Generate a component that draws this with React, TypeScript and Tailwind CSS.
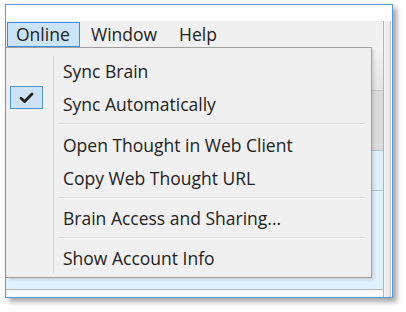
type Item = { label: string; checked?: boolean } | { sep: true };

const items: Item[] = [
  { label: "Sync Brain" },
  { label: "Sync Automatically", checked: true },
  { sep: true },
  { label: "Open Thought in Web Client" },
  { label: "Copy Web Thought URL" },
  { sep: true },
  { label: "Brain Access and Sharing..." },
  { sep: true },
  { label: "Show Account Info" },
];

function OnlineMenu() {
  return (
    <div className="absolute left-0 top-0 w-[366px] h-[231px] bg-[#f0f0f0] border-t border-r border-b border-[#a0a0a0] pt-[6px] shadow-[2px_2px_3px_rgba(0,0,0,0.12)]">
      {/* icon gutter line */}
      <div className="absolute left-[47px] top-[8px] h-[217px] w-[2px] border-l border-[#dadada] border-r-white" />
      {items.map((it, i) =>
        "sep" in it ? (
          <div key={i} className={`${i === 2 ? "h-[8px]" : "h-[7px]"} flex items-center pl-[52px] pr-[6px]`}>
            <div className="h-[2px] w-full border-t border-[#d7d7d7] border-b border-b-white" />
          </div>
        ) : (
          <div key={i} className="relative h-[33px] flex items-center pl-[57px] text-[17.5px] text-[#222] pt-[2px]">
            {it.checked && (
              <div className="absolute left-[4px] top-[-1px] w-[33px] h-[23px] bg-[#cde2f4] border border-[#4f95d6] flex items-center justify-center">
                <svg width="15" height="12" viewBox="0 0 15 12" fill="none">
                  <path d="M2 6.2 L5.6 9.6 L13 2" stroke="#1f1f1f" strokeWidth="2.8" strokeLinecap="round" strokeLinejoin="round" />
                </svg>
              </div>
            )}
            {it.label}
          </div>
        )
      )}
    </div>
  );
}

export default function App() {
  return (
    <div className="w-[406px] h-[312px] bg-white pl-[5px] pt-[4px]" style={{ fontFamily: '"Open Sans", "Noto Sans", sans-serif' }}>
      <div className="w-[388px] h-[294px] border border-[#5b9bd5] bg-white flex flex-col shadow-[4px_4px_5px_rgba(0,0,0,0.35)]">
        {/* title strip */}
        <div className="h-[16px] bg-white" />
        <div className="flex-1 flex">
          <div className="w-[377px] flex flex-col">
            {/* menu bar */}
            <div className="h-[26px] bg-[#f0f0f0] flex text-[17.5px] text-[#222]">
              <div className="ml-[1px] mt-[1px] w-[73px] h-[25px] bg-[#cce4f7] border border-[#3d8ee0] pl-[8px] flex items-center">
                Online
              </div>
              <div className="w-[87px] pl-[11px] flex items-center">Window</div>
              <div className="pl-[12px] flex items-center">Help</div>
            </div>
            {/* content behind the menu */}
            <div className="relative flex-1 flex flex-col border-b border-[#b5b5b5]">
              <div className="h-[44px] bg-gradient-to-b from-[#f2f2f2] to-[#e4e4e4] border-b border-[#c6c6c6]" />
              <div className="h-[60px] bg-[#dcdcdc] border-b border-[#b9c7d4]" />
              <div className="h-[40px] bg-[#ddeefc] border-b border-[#b8c6d3]" />
              <div className="flex-1 bg-[#e3f1fd]" />
              <OnlineMenu />
            </div>
            <div className="h-[7px] bg-[#f7fbff]" />
          </div>
          {/* right frame strip */}
          <div className="w-[8px] border-l border-[#b4b4b4] border-r border-r-[#c8c8c8] bg-gradient-to-r from-[#f4f4f4] to-[#e6e6e6]" />
          <div className="w-[1px] bg-white" />
        </div>
      </div>
    </div>
  );
}
